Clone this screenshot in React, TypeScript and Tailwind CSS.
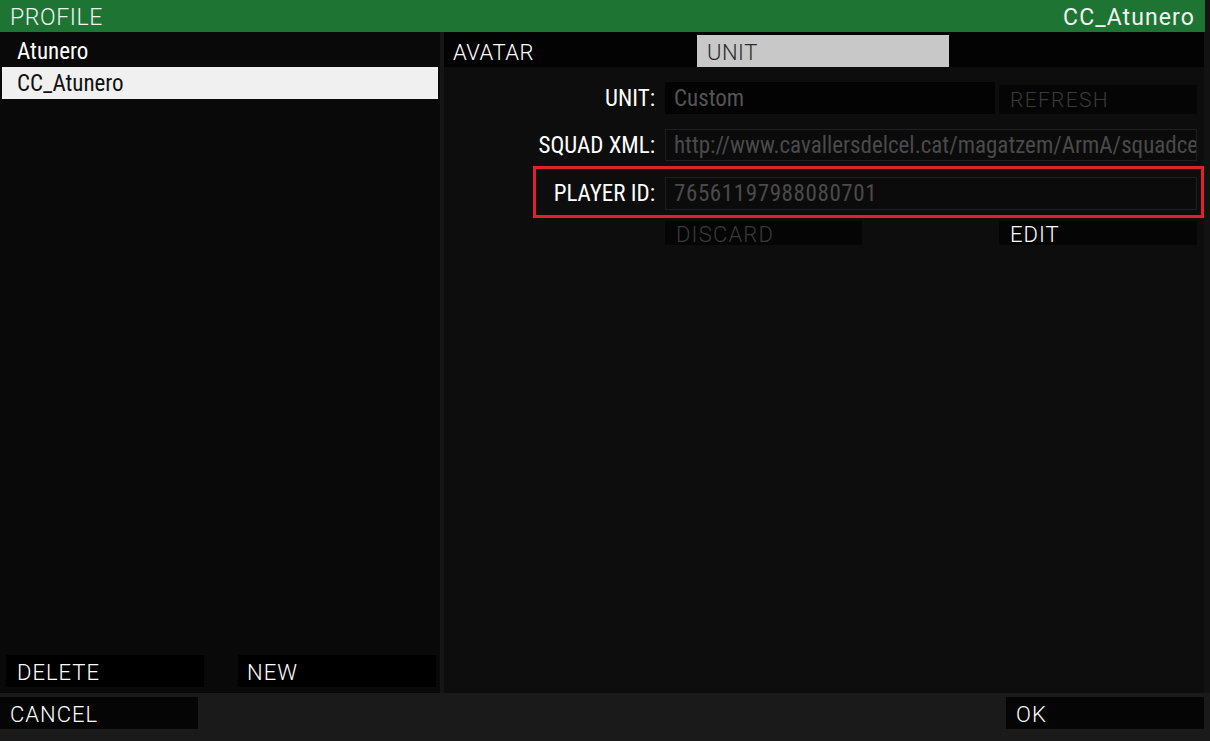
import React from "react";

const cond = { fontFamily: '"Roboto Condensed", "Liberation Sans Narrow", Roboto, sans-serif' };
const thin = { fontFamily: 'Roboto, "Liberation Sans", sans-serif' };

function ThinText({ children, className = "" }: { children: React.ReactNode; className?: string }) {
  return (
    <span className={`inline-block font-light leading-none whitespace-nowrap ${className}`} style={thin}>
      {children}
    </span>
  );
}

function CondText({ children, className = "" }: { children: React.ReactNode; className?: string }) {
  return (
    <span className={`inline-block whitespace-nowrap leading-none ${className}`} style={cond}>
      {children}
    </span>
  );
}

function Label({ children }: { children: React.ReactNode }) {
  return (
    <div className="w-[211px] flex justify-end">
      <CondText className="text-[23px] text-white">{children}</CondText>
    </div>
  );
}

export default function App() {
  return (
    <div className="w-[1210px] h-[741px] bg-[#1a1a1a] flex flex-col overflow-hidden select-none">
      {/* Header */}
      <div className="h-[32px] flex shrink-0">
        <div className="w-[1205px] bg-[#1e7432] flex items-center justify-between pl-[10px] pr-[10px] pt-[2px]">
          <ThinText className="text-[23px] text-[#f2f2f2] tracking-[0.6px]">PROFILE</ThinText>
          <span className="text-[23px] text-[#f2f2f2] leading-none tracking-[1.1px]" style={thin}>CC_Atunero</span>
        </div>
        <div className="flex-1 bg-[#141414]" />
      </div>

      {/* Main */}
      <div className="h-[661px] flex shrink-0">
        {/* Left panel */}
        <div className="w-[440px] bg-[#090909] flex flex-col pt-[3px]">
          <div className="h-[32px] flex items-center pl-[17px] pr-[2px] pt-[1px]">
            <CondText className="text-[23px] text-white">Atunero</CondText>
          </div>
          <div className="h-[32px] flex items-center pl-[15px] ml-[2px] mr-[2px] bg-[#f0f0f0] pt-[1px]">
            <CondText className="text-[23px] text-[#111]">CC_Atunero</CondText>
          </div>
          <div className="flex-1" />
          <div className="flex justify-between px-[4px] pb-[6px] pl-[6px]">
            <div className="w-[198px] h-[32px] bg-black flex items-center pl-[11px] pt-[3px]">
              <ThinText className="text-[22px] text-white tracking-[1px]">DELETE</ThinText>
            </div>
            <div className="w-[198px] h-[32px] bg-black flex items-center pl-[9px] pt-[3px]">
              <ThinText className="text-[22px] text-white tracking-[1px]">NEW</ThinText>
            </div>
          </div>
        </div>

        {/* Divider */}
        <div className="w-[4px] bg-[#161616]" />

        {/* Right panel */}
        <div className="w-[760px] bg-[#0d0d0d] flex flex-col relative">
          <div className="h-[35px] bg-[#030303] flex items-end pt-[3px]">
            <div className="w-[253px] h-[32px] flex items-center pl-[9px] pt-[3px]">
              <ThinText className="text-[22px] text-white tracking-[0.5px]">AVATAR</ThinText>
            </div>
            <div className="w-[252px] h-[32px] bg-[#c8c8c8] flex items-center pl-[10px] pt-[3px]">
              <ThinText className="text-[22px] text-[#2a2a2a] tracking-[0.5px]">UNIT</ThinText>
            </div>
          </div>

          <div className="flex flex-col pt-[15px] pr-[7px]">
            {/* UNIT row */}
            <div className="flex h-[32px] items-center">
              <Label>UNIT:</Label>
              <div className="ml-[10px] w-[330px] h-[32px] bg-[#030303] flex items-center pl-[9px]">
                <CondText className="text-[23px] text-[#555]">Custom</CondText>
              </div>
              <div className="ml-[4px] w-[198px] h-[29px] mt-[3px] bg-[#050505] flex items-center pl-[11px] pt-[2px]">
                <ThinText className="text-[21px] text-[#3a3a3a] tracking-[1.3px]">REFRESH</ThinText>
              </div>
            </div>

            {/* SQUAD XML row */}
            <div className="flex h-[32px] items-center mt-[15px]">
              <Label>SQUAD XML:</Label>
              <div className="ml-[10px] flex-1 min-w-0 h-[32px] bg-[#0b0b0b] border border-[#1f1f1f] flex items-center pl-[8px] overflow-hidden">
                <CondText className="text-[23px] text-[#4a4a4a]">http://www.cavallersdelcel.cat/magatzem/ArmA/squadcel/squad.xml</CondText>
              </div>
            </div>

            {/* PLAYER ID row */}
            <div className="flex h-[33px] items-center mt-[16px]">
              <Label>PLAYER ID:</Label>
              <div className="ml-[10px] flex-1 h-[33px] bg-[#0b0b0b] border border-[#1f1f1f] flex items-center pl-[8px] overflow-hidden">
                <CondText className="text-[23px] text-[#4a4a4a] tracking-[0.6px]">76561197988080701</CondText>
              </div>
            </div>

            {/* Buttons row */}
            <div className="flex h-[24px] mt-[11px]">
              <div className="ml-[221px] w-[197px] h-[24px] bg-[#050505] flex items-center pl-[11px] pt-[3px]">
                <ThinText className="text-[22px] text-[#3a3a3a] tracking-[1.2px]">DISCARD</ThinText>
              </div>
              <div className="ml-[137px] w-[198px] h-[24px] bg-[#050505] flex items-center pl-[11px] pt-[3px]">
                <ThinText className="text-[22px] text-white tracking-[1px]">EDIT</ThinText>
              </div>
            </div>
          </div>

          {/* Red annotation box */}
          <div className="absolute left-[89px] top-[134px] w-[671px] h-[52px] border-[3px] border-[#e0202a] pointer-events-none" />
        </div>

        <div className="flex-1 bg-[#121212]" />
      </div>

      {/* Bottom bar */}
      <div className="flex-1 flex pt-[4px]">
        <div className="w-[198px] h-[32px] bg-[#050505] flex items-center pl-[10px] pt-[3px]">
          <ThinText className="text-[22px] text-white tracking-[1px]">CANCEL</ThinText>
        </div>
        <div className="flex-1" />
        <div className="w-[198px] h-[32px] bg-[#050505] flex items-center pl-[10px] mr-[6px] pt-[3px]">
          <ThinText className="text-[22px] text-white tracking-[1px]">OK</ThinText>
        </div>
      </div>
    </div>
  );
}
